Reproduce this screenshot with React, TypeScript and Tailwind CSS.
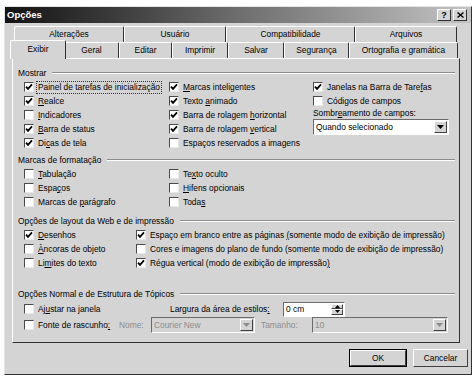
import React from 'react';

const font = { fontFamily: '"Liberation Sans", Arial, sans-serif' };

const Chk: React.FC<{ checked?: boolean }> = ({ checked }) => (
  <span className="w-[10px] h-[10px] shrink-0 bg-white border border-t-[#4a4a4a] border-l-[#4a4a4a] border-r-[#e8e8e8] border-b-[#e8e8e8] flex items-center justify-center">
    {checked && (
      <svg width="8" height="8" viewBox="0 0 8 8">
        <path d="M1 3.6 L3 5.8 L7 1.4" stroke="#000" strokeWidth="1.8" fill="none" />
      </svg>
    )}
  </span>
);

// label with one underlined (mnemonic) char
const M: React.FC<{ t: string; u?: number }> = ({ t, u }) => {
  if (u === undefined || u < 0) return <span>{t}</span>;
  return (
    <span>
      {t.slice(0, u)}
      <span className="underline underline-offset-[1px]">{t[u]}</span>
      {t.slice(u + 1)}
    </span>
  );
};

const Row: React.FC<{ checked?: boolean; t: string; u?: number; focus?: boolean; w?: string }> = ({ checked, t, u, focus, w }) => (
  <div className={`flex items-center h-[14px] gap-[3px] whitespace-nowrap ${w ?? ''}`}>
    <Chk checked={checked} />
    <span className={`px-[1px] leading-[11px] ${focus ? 'outline outline-1 outline-dotted outline-[#333]' : ''}`}>
      <M t={t} u={u} />
    </span>
  </div>
);

const Header: React.FC<{ t: string }> = ({ t }) => (
  <div className="flex items-center h-[14px] pl-[5px] pr-[4px] whitespace-nowrap">
    <span>{t}</span>
    <div className="flex-1 ml-[6px] h-0 border-t border-t-[#8c8c8c] border-b border-b-white" />
  </div>
);

const Arrow: React.FC<{ disabled?: boolean }> = ({ disabled }) => (
  <span className="w-[13px] h-full shrink-0 bg-[#d4d4d4] border border-t-white border-l-white border-r-[#404040] border-b-[#404040] flex items-center justify-center">
    <svg width="7" height="4" viewBox="0 0 7 4">
      <path d="M0 0 H7 L3.5 4 Z" fill={disabled ? '#8c8c8c' : '#000'} />
    </svg>
  </span>
);

const Select: React.FC<{ text: string; w: string; disabled?: boolean }> = ({ text, w, disabled }) => (
  <div className={`${w} h-[16px] shrink-0 flex items-stretch border border-t-[#6a6a6a] border-l-[#6a6a6a] border-r-white border-b-white p-[1px] ${disabled ? 'bg-[#d4d4d4]' : 'bg-white'}`}>
    <span className={`flex-1 leading-[12px] pl-[1px] whitespace-nowrap ${disabled ? 'text-[#8c8c8c]' : ''}`}>{text}</span>
    <Arrow disabled={disabled} />
  </div>
);

const Tab: React.FC<{ t: string; w: string; selected?: boolean }> = ({ t, w, selected }) => (
  <div
    className={`${w} shrink-0 flex items-center justify-center whitespace-nowrap border-t border-l border-r border-t-white border-l-white border-r-[#303030] rounded-t-[2px] bg-[#d4d4d4] ${
      selected ? 'relative z-10 h-[19px] -mt-[2px] -mx-[2px] -mb-[1px] pb-[1px]' : 'h-[16px]'
    }`}
  >
    {t}
  </div>
);

const Btn: React.FC<{ t: string; w: string; def?: boolean }> = ({ t, w, def }) => (
  <div className={`${w} h-[18px] ${def ? 'border border-black' : ''}`}>
    <div className="w-full h-full flex items-center justify-center bg-[#d4d4d4] border border-t-white border-l-white border-r-[#404040] border-b-[#404040]">
      {t}
    </div>
  </div>
);

export default function App() {
  return (
    <div className="w-[475px] h-[376px] bg-white pt-[6px] pl-[4px] text-[8.4px] text-black" style={font}>
      <div className="w-[468px] h-[369px] bg-[#d4d4d4] border border-t-[#e4e4e4] border-l-[#e4e4e4] border-r-[#303030] border-b-[#303030] flex flex-col">
        {/* title bar */}
        <div className="h-[16px] flex items-center justify-between bg-gradient-to-r from-[#141414] via-[#6e6e6e] to-[#c4c4c4] pl-[2px] pr-[4px]">
          <span className="text-white font-bold text-[9.5px]">Opções</span>
          <div className="flex gap-[2px]">
            <span className="w-[14px] h-[12px] bg-[#d4d4d4] border border-t-white border-l-white border-r-[#303030] border-b-[#303030] flex items-center justify-center font-bold text-[9px] leading-none">?</span>
            <span className="w-[14px] h-[12px] bg-[#d4d4d4] border border-t-white border-l-white border-r-[#303030] border-b-[#303030] flex items-center justify-center">
              <svg width="7" height="6" viewBox="0 0 7 6">
                <path d="M0.5 0.5 L6.5 5.5 M6.5 0.5 L0.5 5.5" stroke="#000" strokeWidth="1.4" />
              </svg>
            </span>
          </div>
        </div>

        <div className="pl-[7px] pt-[3px]">
          {/* tab row 1 */}
          <div className="flex pl-[2px]">
            <Tab t="Alterações" w="w-[110px]" />
            <Tab t="Usuário" w="w-[102px]" />
            <Tab t="Compatibilidade" w="w-[129px]" />
            <Tab t="Arquivos" w="w-[102px]" />
          </div>
          {/* tab row 2 */}
          <div className="flex items-end">
            <Tab t="Exibir" w="w-[56px]" selected />
            <Tab t="Geral" w="w-[55px]" />
            <Tab t="Editar" w="w-[53px]" />
            <Tab t="Imprimir" w="w-[56px]" />
            <Tab t="Salvar" w="w-[56px]" />
            <Tab t="Segurança" w="w-[65px]" />
            <Tab t="Ortografia e gramática" w="w-[109px]" />
          </div>

          {/* panel */}
          <div className="w-[448px] h-[285px] border border-t-white border-l-white border-r-[#303030] border-b-[#303030] pt-[7px]">
            <Header t="Mostrar" />
            <div className="flex pl-[11px]">
              <div className="w-[145px] flex flex-col">
                <Row checked t="Painel de tarefas de inicialização" focus />
                <Row checked t="Realce" u={0} />
                <Row t="Indicadores" u={0} />
                <Row checked t="Barra de status" u={0} />
                <Row checked t="Dicas de tela" u={2} />
              </div>
              <div className="w-[144px] flex flex-col">
                <Row checked t="Marcas inteligentes" u={0} />
                <Row checked t="Texto animado" u={6} />
                <Row checked t="Barra de rolagem horizontal" u={17} />
                <Row checked t="Barra de rolagem vertical" u={17} />
                <Row t="Espaços reservados a imagens" />
              </div>
              <div className="flex flex-col">
                <Row checked t="Janelas na Barra de Tarefas" u={24} />
                <Row t="Códigos de campos" u={4} />
                <div className="h-[11px] leading-[11px] whitespace-nowrap">
                  <M t="Sombreamento de campos:" u={5} />
                </div>
                <Select text="Quando selecionado" w="w-[136px]" />
              </div>
            </div>

            <div className="mt-[3px]">
              <Header t="Marcas de formatação" />
            </div>
            <div className="flex pl-[11px]">
              <div className="w-[145px] flex flex-col">
                <Row t="Tabulação" u={0} />
                <Row t="Espaços" u={4} />
                <Row t="Marcas de parágrafo" u={10} />
              </div>
              <div className="flex flex-col">
                <Row t="Texto oculto" u={2} />
                <Row t="Hifens opcionais" u={0} />
                <Row t="Todas" u={4} />
              </div>
            </div>

            <div className="mt-[5px]">
              <Header t="Opções de layout da Web e de impressão" />
            </div>
            <div className="flex pl-[11px]">
              <div className="w-[112px] flex flex-col">
                <Row checked t="Desenhos" u={0} />
                <Row t="Âncoras de objeto" u={0} />
                <Row t="Limites do texto" u={2} />
              </div>
              <div className="flex flex-col">
                <Row checked t="Espaço em branco entre as páginas (somente modo de exibição de impressão)" u={34} />
                <Row t="Cores e imagens do plano de fundo (somente modo de exibição de impressão)" u={34} />
                <Row checked t="Régua vertical (modo de exibição de impressão)" u={45} />
              </div>
            </div>

            <div className="mt-[17px]">
              <Header t="Opções Normal e de Estrutura de Tópicos" />
            </div>
            <div className="flex items-center pl-[11px] h-[16px] whitespace-nowrap">
              <Row t="Ajustar na janela" u={2} w="w-[146px]" />
              <span className="w-[113px]">
                <M t="Largura da área de estilos:" u={26} />
              </span>
              <div className="w-[62px] h-[15px] flex items-stretch bg-white border border-t-[#6a6a6a] border-l-[#6a6a6a] border-r-white border-b-white p-[1px]">
                <span className="flex-1 leading-[11px] pl-[1px]">0 cm</span>
                <div className="w-[12px] flex flex-col">
                  <span className="flex-1 bg-[#d4d4d4] border border-t-white border-l-white border-r-[#404040] border-b-[#404040] flex items-center justify-center">
                    <svg width="5" height="3" viewBox="0 0 5 3"><path d="M0 3 H5 L2.5 0 Z" fill="#000" /></svg>
                  </span>
                  <span className="flex-1 bg-[#d4d4d4] border border-t-white border-l-white border-r-[#404040] border-b-[#404040] flex items-center justify-center">
                    <svg width="5" height="3" viewBox="0 0 5 3"><path d="M0 0 H5 L2.5 3 Z" fill="#000" /></svg>
                  </span>
                </div>
              </div>
            </div>
            <div className="flex items-center pl-[11px] h-[16px] whitespace-nowrap">
              <Row t="Fonte de rascunho:" u={17} w="w-[95px]" />
              <span className="w-[32px] text-[#8c8c8c]">Nome:</span>
              <Select text="Courier New" w="w-[104px]" disabled />
              <span className="w-[51px] ml-[6px] text-[#8c8c8c]">Tamanho:</span>
              <Select text="10" w="w-[136px]" disabled />
            </div>
          </div>

          {/* buttons */}
          <div className="flex justify-end gap-[6px] pr-[3px] mt-[6px]">
            <Btn t="OK" w="w-[58px]" def />
            <Btn t="Cancelar" w="w-[55px]" />
          </div>
        </div>
      </div>
    </div>
  );
}
